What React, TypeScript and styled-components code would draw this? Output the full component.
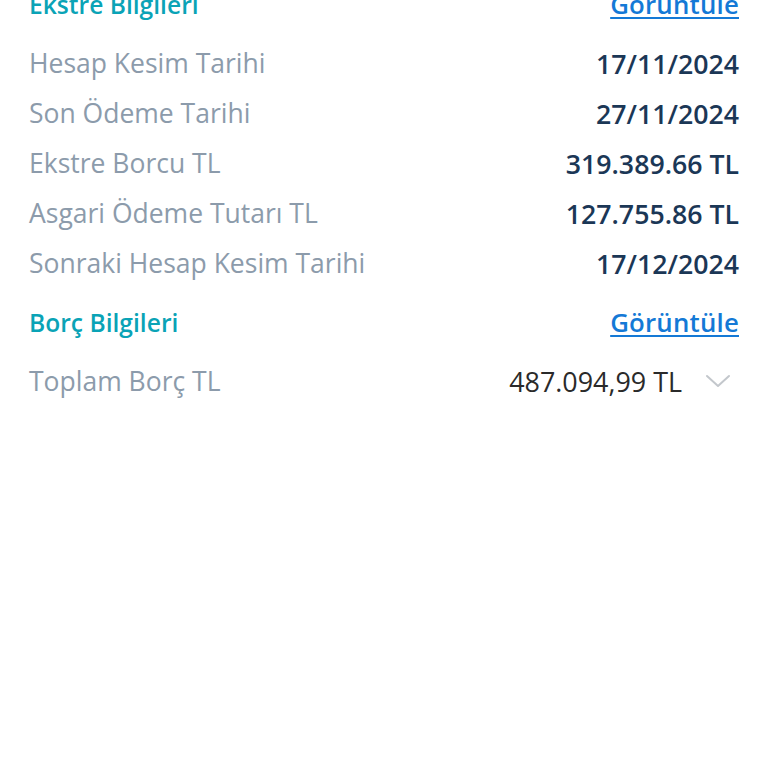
import React from "react";
import styled, { createGlobalStyle } from "styled-components";

const GlobalStyle = createGlobalStyle`
    html, body {
        margin: 0;
        padding: 0;
        background: #ffffff;
    }
    body {
        font-family: "Open Sans", "Noto Sans", sans-serif;
        -webkit-font-smoothing: antialiased;
    }
`;

const ekstre = [
    { label: "Hesap Kesim Tarihi", value: "17/11/2024" },
    { label: "Son Ödeme Tarihi", value: "27/11/2024" },
    { label: "Ekstre Borcu TL", value: "319.389.66 TL" },
    { label: "Asgari Ödeme Tutarı TL", value: "127.755.86 TL" },
    { label: "Sonraki Hesap Kesim Tarihi", value: "17/12/2024" },
];

const ChevronDown: React.FC = () => (
    <svg width="26" height="14" viewBox="0 0 26 14" fill="none">
        <path
            d="M2 2L13 12L24 2"
            stroke="#c3c7cc"
            strokeWidth="2"
            strokeLinecap="round"
            strokeLinejoin="round"
        />
    </svg>
);

const App: React.FC = () => {
    return (
        <>
            <GlobalStyle />
            <Page>
                <SectionHeader>
                    <Heading>Ekstre Bilgileri</Heading>
                    <ViewLink href="#">Görüntüle</ViewLink>
                </SectionHeader>
                {ekstre.map((row) => (
                    <Row key={row.label}>
                        <Label>{row.label}</Label>
                        <Value>{row.value}</Value>
                    </Row>
                ))}
                <SectionHeader $spaced>
                    <Heading>Borç Bilgileri</Heading>
                    <ViewLink href="#">Görüntüle</ViewLink>
                </SectionHeader>
                <Row>
                    <Label>Toplam Borç TL</Label>
                    <Total>
                        <TotalValue>487.094,99 TL</TotalValue>
                        <Toggle>
                            <ChevronDown />
                        </Toggle>
                    </Total>
                </Row>
            </Page>
        </>
    );
};

const Page = styled.div`
    display: flex;
    flex-direction: column;
    margin-top: -21px;
    padding: 0 29px;
`;

const SectionHeader = styled.div<{ $spaced?: boolean }>`
    display: flex;
    align-items: center;
    justify-content: space-between;
    height: 50px;
    margin-top: ${({ $spaced }) => ($spaced ? "9px" : "0")};
    margin-bottom: 9px;
`;

const Heading = styled.h2`
    margin: 0;
    font-size: 24.6px;
    font-weight: 600;
    color: #0aa3b6;
`;

const ViewLink = styled.a`
    font-size: 25.8px;
    font-weight: 600;
    letter-spacing: 0.2px;
    color: #1479d6;
    text-decoration: underline;
    text-underline-offset: 3px;
    text-decoration-thickness: 2px;
`;

const Row = styled.div`
    display: flex;
    align-items: center;
    justify-content: space-between;
    height: 50px;
`;

const Label = styled.span`
    font-size: 26.5px;
    color: #8c9bab;
`;

const Value = styled.span`
    font-size: 26.7px;
    font-weight: 600;
    color: #1b3756;
`;

const Total = styled.div`
    display: flex;
    align-items: center;
    gap: 23px;
`;

const TotalValue = styled.span`
    font-size: 26.9px;
    font-weight: 500;
    color: #2a2a2a;
`;

const Toggle = styled.span`
    display: flex;
    align-items: center;
    width: 34px;
    justify-content: flex-start;
`;

export default App;
